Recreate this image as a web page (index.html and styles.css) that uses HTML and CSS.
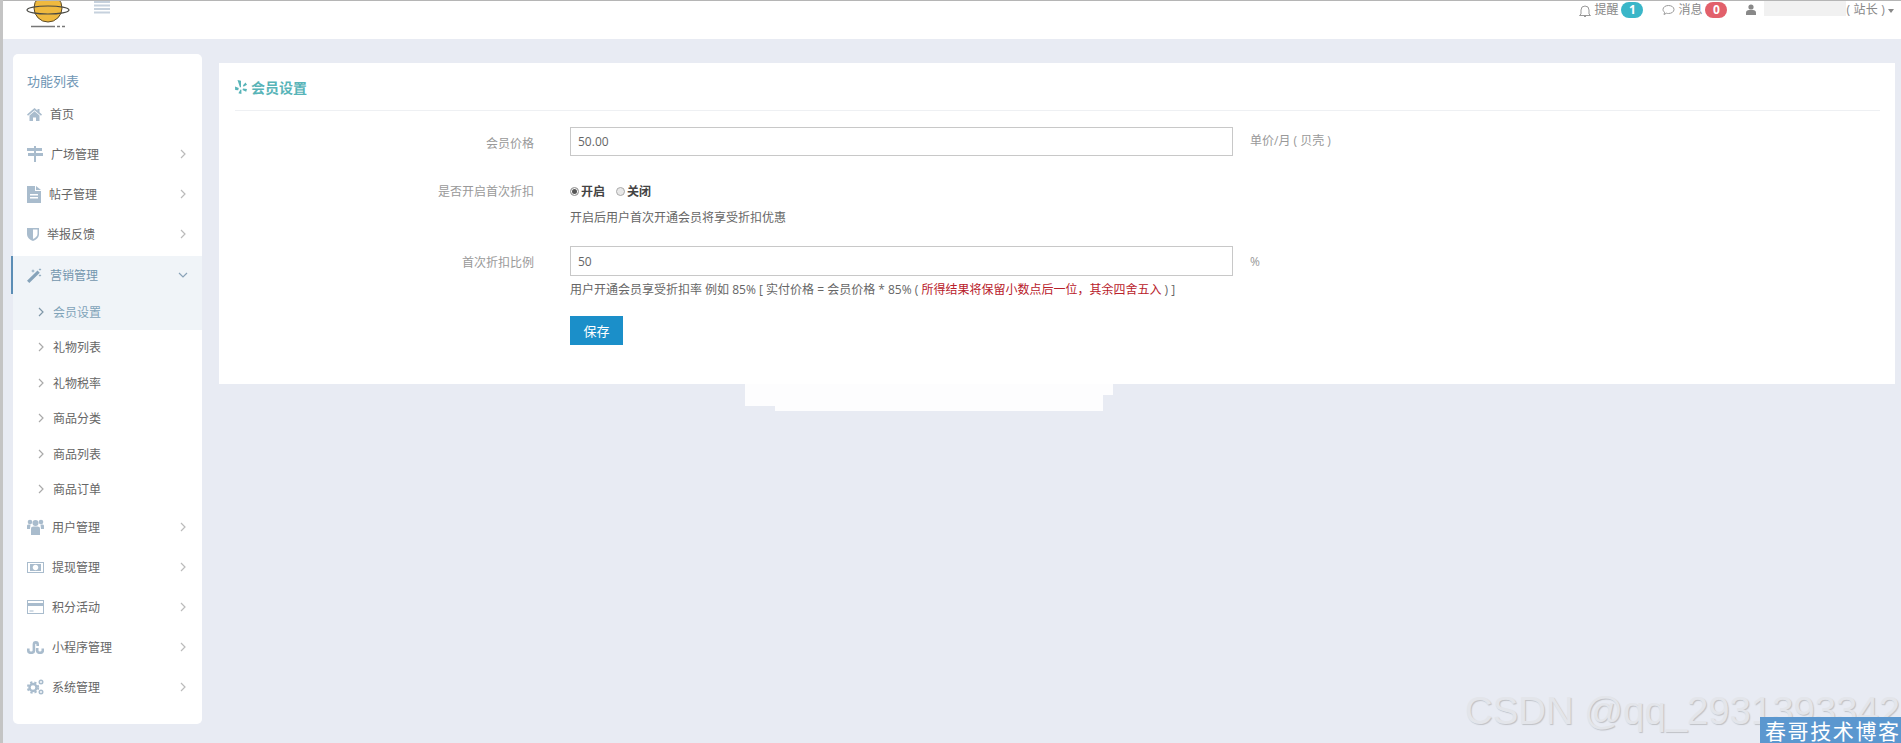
FILE: index.html
```html
<!DOCTYPE html>
<html lang="zh-CN">
<head>
  <meta charset="UTF-8">
  <title>会员设置</title>
  <link rel="stylesheet" href="styles.css">
</head>
<body>
<svg class="defs" width="0" height="0">
  <symbol id="chev-r" viewBox="0 0 6 10"><path d="M1 1l4 4-4 4" fill="none" stroke="currentColor" stroke-width="1.2"/></symbol>
  <symbol id="chev-d" viewBox="0 0 10 6"><path d="M1 1l4 4 4-4" fill="none" stroke="currentColor" stroke-width="1.2"/></symbol>
</svg>

<!-- header -->
<header class="topbar">
  <div class="brand">
    <svg class="logo" width="46" height="28" viewBox="0 0 46 28">
      <circle cx="22" cy="7" r="14" fill="#efb93f" stroke="#5a4a2a" stroke-width="1"/>
      <ellipse cx="22" cy="9" rx="21" ry="4" fill="none" stroke="#4a4a44" stroke-width="1.2"/>
      <path d="M5 25.500h34" stroke="#777" stroke-width="1.500" stroke-dasharray="24 2 3 2 3"/>
    </svg>
    <svg class="menu-icon" width="16" height="14" viewBox="0 0 16 14">
      <path d="M0 1h16M0 4.500h16M0 8h16M0 11.500h16" stroke="#c6d1dd" stroke-width="2"/>
    </svg>
  </div>
  <div class="top-right">
    <svg width="12" height="14" viewBox="0 0 12 14"><path d="M2 10V6a4 4 0 018 0v4l1.500 1.500h-11zM5 12.500h2" fill="none" stroke="#999"/></svg>
    <span class="top-text">提醒</span><span class="badge badge-teal">1</span>
    <svg class="msg-icon" width="13" height="12" viewBox="0 0 13 12"><path d="M6.500 1.500c3 0 5.500 1.600 5.500 4s-2.500 4-5.500 4c-.8 0-1.400 0-2-.3L2 10.500l.6-2.200C1.600 7.600 1 6.600 1 5.500c0-2.400 2.500-4 5.500-4z" fill="none" stroke="#999"/></svg>
    <span class="top-text">消息</span><span class="badge badge-red">0</span>
    <svg class="user-icon" width="10" height="11" viewBox="0 0 10 11"><circle cx="5" cy="3" r="2.600" fill="#888"/><path d="M0 11V8.500C0 7 1.500 6 3 6h4c1.500 0 3 1 3 2.500V11z" fill="#888"/></svg>
    <span class="name-blur"></span>
    <span class="top-text role">( 站长 )</span>
    <span class="caret"></span>
  </div>
</header>

<div class="page">
  <!-- sidebar -->
  <nav class="sidebar">
    <div class="side-title">功能列表</div>
    <a class="nav-item home">
      <svg class="nav-icon" width="15" height="13" viewBox="0 0 15 13"><path d="M7.500 0L0 6.500l1 1.200 6.500-5.500 6.500 5.500 1-1.200-2.500-2.200V1h-2v1.500zM2.500 7.500V13h3.500V9.500h3V13h3.500V7.500L7.500 3.200z"/></svg>
      <span>首页</span>
    </a>
    <a class="nav-item">
      <svg class="nav-icon" width="16" height="16" viewBox="0 0 16 16"><path d="M7 0h2v2h6v3H9v2h7v3H9v6H7v-6H1V7h6V5H0V2h7z"/></svg>
      <span>广场管理</span>
      <svg class="arrow"><use href="#chev-r"/></svg>
    </a>
    <a class="nav-item">
      <svg class="nav-icon" width="14" height="17" viewBox="0 0 14 17"><path d="M0 0h8v5h6v12H0zM9 0l5 4H9zM3 8v1.500h8V8zM3 11v1.500h8V11z" fill-rule="evenodd"/></svg>
      <span>帖子管理</span>
      <svg class="arrow"><use href="#chev-r"/></svg>
    </a>
    <a class="nav-item">
      <svg class="nav-icon" width="12" height="14" viewBox="0 0 12 14"><path d="M0 1h12v6c0 3.500-3 6-6 7-3-1-6-3.500-6-7zM6 2.500V12c2-.9 4.500-2.500 4.500-5V2.500z" fill-rule="evenodd"/></svg>
      <span>举报反馈</span>
      <svg class="arrow"><use href="#chev-r"/></svg>
    </a>
    <div class="nav-open">
      <a class="nav-item active">
        <svg class="nav-icon" width="15" height="15" viewBox="0 0 15 15"><path d="M10.500 2.500L0 12.700 2.300 15 12.800 4.800zM6 1l.5 1.500L8 3l-1.500.5L6 5l-.5-1.500L4 3l1.500-.5zM13 6l.4 1.100 1.100.4-1.100.4L13 9l-.4-1.100-1.100-.4 1.100-.4zM13 0l.4 1.100 1.100.4-1.100.4-.4 1.100-.4-1.100-1.100-.4 1.100-.4z"/></svg>
        <span>营销管理</span>
        <svg class="arrow arrow-down"><use href="#chev-d"/></svg>
      </a>
      <a class="sub-item current"><svg class="sub-arrow"><use href="#chev-r"/></svg><span>会员设置</span></a>
    </div>
    <a class="sub-item"><svg class="sub-arrow"><use href="#chev-r"/></svg><span>礼物列表</span></a>
    <a class="sub-item"><svg class="sub-arrow"><use href="#chev-r"/></svg><span>礼物税率</span></a>
    <a class="sub-item"><svg class="sub-arrow"><use href="#chev-r"/></svg><span>商品分类</span></a>
    <a class="sub-item"><svg class="sub-arrow"><use href="#chev-r"/></svg><span>商品列表</span></a>
    <a class="sub-item"><svg class="sub-arrow"><use href="#chev-r"/></svg><span>商品订单</span></a>
    <a class="nav-item">
      <svg class="nav-icon" width="17" height="16" viewBox="0 0 17 16"><circle cx="3" cy="3" r="2.300"/><circle cx="14" cy="3" r="2.300"/><circle cx="8.500" cy="4" r="3"/><path d="M0 10V7c0-1 .7-1.500 1.500-1.500h2L3 10zM17 10V7c0-1-.7-1.500-1.500-1.500h-2L14 10zM4 16V10c0-1.800 1-2.500 2.500-2.500h4C12 7.500 13 8.200 13 10v6z"/></svg>
      <span>用户管理</span>
      <svg class="arrow"><use href="#chev-r"/></svg>
    </a>
    <a class="nav-item">
      <svg class="nav-icon" width="17" height="11" viewBox="0 0 17 11"><path d="M0 0h17v11H0zM1 1v9h15V1zM3 2h11v7H3zM8.500 2.800c-1.500 0-2.800 1.200-2.800 2.700s1.300 2.700 2.800 2.700 2.800-1.200 2.800-2.700-1.300-2.700-2.800-2.700z" fill-rule="evenodd"/></svg>
      <span>提现管理</span>
      <svg class="arrow"><use href="#chev-r"/></svg>
    </a>
    <a class="nav-item">
      <svg class="nav-icon" width="17" height="14" viewBox="0 0 17 14"><path d="M0 0h17v14H0zM1 1v2h15V1zM1 6v7h15V6zM2.500 10.500h4v1h-4z" fill-rule="evenodd"/></svg>
      <span>积分活动</span>
      <svg class="arrow"><use href="#chev-r"/></svg>
    </a>
    <a class="nav-item">
      <svg class="stumble" width="17" height="13" viewBox="0 0 17 13"><path d="M1.300 7.500v2a2.800 2.300 0 005.600 0v-6a1.900 2.100 0 013.800 0v1.500M10.200 7v2.500a2.800 2.300 0 005.600 0v-2"/></svg>
      <span>小程序管理</span>
      <svg class="arrow"><use href="#chev-r"/></svg>
    </a>
    <a class="nav-item">
      <svg class="gears" width="17" height="16" viewBox="0 0 17 16"><circle class="gear-ring" cx="6" cy="8.500" r="3.500"/><circle class="gear-teeth" cx="6" cy="8.500" r="5.200"/><circle class="gear-small" cx="14" cy="3" r="1.700"/><circle class="gear-small" cx="14" cy="13" r="1.700"/></svg>
      <span>系统管理</span>
      <svg class="arrow"><use href="#chev-r"/></svg>
    </a>
  </nav>

  <!-- content -->
  <main class="content">
    <section class="card">
      <h2 class="card-title">
        <svg width="12" height="14" viewBox="0 0 12 14"><path d="M2.500 0l3.500.8V7L5 7.400zM0 6.500l3.800 1.500-.6 2.200L.2 10zM5.500 9.500l.9.2V14l-3-.7zM8 5.200L10.500 2.500l1.500 2.300-3.500 2zM8 8.500l4 .4-.8 2.800-3.700-1.700z"/></svg>
        <span>会员设置</span>
      </h2>
      <div class="form-row row-first">
        <label class="form-label">会员价格</label>
        <input class="form-input" type="text" value="50.00">
        <span class="unit">单价/月 ( 贝壳 )</span>
      </div>
      <div class="form-row row-radio">
        <label class="form-label">是否开启首次折扣</label>
        <div class="form-field">
          <div class="radios">
            <span class="radio checked"></span><b>开启</b>
            <span class="radio second"></span><b>关闭</b>
          </div>
          <p class="help help-first">开启后用户首次开通会员将享受折扣优惠</p>
        </div>
      </div>
      <div class="form-row row-rate">
        <label class="form-label">首次折扣比例</label>
        <input class="form-input" type="text" value="50">
        <span class="unit">%</span>
      </div>
      <p class="help help-rate">用户开通会员享受折扣率 例如 85% [ 实付价格 = 会员价格 * 85% ( <span class="red">所得结果将保留小数点后一位，其余四舍五入</span> ) ]</p>
      <button class="btn-save" type="button">保存</button>
    </section>
    <div class="smudge smudge-a"></div>
    <div class="smudge smudge-b"></div>
  </main>
</div>

<!-- image watermarks -->
<div class="wm-csdn">CSDN @qq_2931393342</div>
<div class="wm-blog">春哥技术博客</div>
</body>
</html>
```

FILE: styles.css
```css
* {
  box-sizing: border-box;
}
html, body {
  margin: 0;
  height: 743px;
  overflow: hidden;
}
body {
  position: relative;
  background: #e8ebf3;
  border-left: 3px solid #c4c4c4;
  font-family: "Open Sans", "Noto Sans CJK SC", sans-serif;
  font-size: 12px;
  color: #666;
}
.defs {
  position: absolute;
}

/* header */
.topbar {
  height: 39px;
  background: #fff;
  border-top: 1px solid #b5b5b5;
  display: flex;
  justify-content: space-between;
}
.brand {
  display: flex;
  align-items: flex-start;
  padding-left: 23px;
}
.menu-icon {
  margin-left: 22px;
}
.top-right {
  display: flex;
  align-items: flex-start;
  height: 18px;
  padding-right: 7px;
  padding-top: 1px;
}
.top-right svg {
  margin-top: 2px;
}
.top-text {
  margin-left: 3px;
  line-height: 16px;
  color: #888;
}
.badge {
  width: 22px;
  height: 16px;
  margin-left: 3px;
  border-radius: 8px;
  color: #fff;
  font-weight: 700;
  font-size: 12px;
  line-height: 16px;
  text-align: center;
}
.badge-teal {
  background: #39b6c8;
}
.badge-red {
  background: #e2606b;
}
.msg-icon {
  margin-left: 19px;
}
.user-icon {
  margin-left: 19px;
}
.name-blur {
  width: 82px;
  height: 15px;
  margin-left: 8px;
  margin-top: -1px;
  background: #f1f1f1;
}
.role {
  margin-left: 0;
  letter-spacing: .2px;
}
.caret {
  margin: 7px 0 0 3px;
  border: 3px solid transparent;
  border-top: 4px solid #888;
  border-bottom: 0;
}

.page {
  display: flex;
  align-items: flex-start;
  padding: 15px 6px 0 10px;
}

/* sidebar */
.sidebar {
  width: 189px;
  height: 670px;
  flex: none;
  padding-top: 16px;
  background: #fff;
  border-radius: 5px;
}
.side-title {
  height: 22px;
  padding-left: 14px;
  font-size: 13px;
  line-height: 22px;
  color: #6f96b5;
}
.nav-item {
  height: 40px;
  display: flex;
  align-items: center;
  padding-left: 14px;
  gap: 8px;
  position: relative;
}
.nav-item.home {
  height: 30px;
  margin-top: 7px;
  margin-bottom: 5px;
}
.nav-icon {
  flex: none;
  fill: #a9bccd;
}
.stumble {
  flex: none;
  fill: none;
  stroke: #a9bccd;
  stroke-width: 2.600;
}
.gears {
  flex: none;
  fill: none;
  stroke: #a9bccd;
}
.gear-ring {
  stroke-width: 2.400;
}
.gear-teeth {
  stroke-width: 2;
  stroke-dasharray: 2.200 2;
}
.gear-small {
  stroke-width: 1.600;
}
.arrow {
  position: absolute;
  right: 16px;
  top: 15px;
  width: 6px;
  height: 10px;
  color: #bbb;
}
.arrow-down {
  width: 10px;
  height: 6px;
  top: 16px;
  right: 14px;
  color: #8aa3b8;
}
.nav-open {
  margin-top: 2px;
  background: #f0f4f8;
  position: relative;
}
.nav-item.active {
  height: 38px;
  color: #7396ad;
  box-shadow: -2px 0 0 #5b8db5;
}
.active .nav-icon {
  fill: #86a3ba;
}
.sub-item {
  height: 35.500px;
  display: flex;
  align-items: center;
  padding-left: 25px;
  gap: 9px;
}
.sub-arrow {
  width: 6px;
  height: 10px;
  color: #aaa;
}
.sub-item.current {
  color: #7fa3b8;
}
.sub-item.current .sub-arrow {
  color: #7f97a8;
}

/* content */
.content {
  flex: 1;
  margin: 9px 0 0 17px;
  position: relative;
}
.card {
  height: 321px;
  padding: 0 15px 0 16px;
  background: #fff;
  position: relative;
  z-index: 1;
}
.card-title {
  height: 48px;
  margin: 0;
  display: flex;
  align-items: center;
  gap: 4px;
  padding-top: 1px;
  border-bottom: 1px solid #eef0f3;
  font-size: 14px;
  font-weight: 700;
  color: #58b4b8;
}
.card-title svg {
  fill: #58b4b8;
}
.form-row {
  display: flex;
  align-items: flex-start;
}
.form-label {
  width: 299px;
  flex: none;
  text-align: right;
  color: #999;
  line-height: 18px;
}
.form-input {
  width: 663px;
  height: 29px;
  margin-left: 36px;
  padding: 0 7px;
  flex: none;
  background: #fff;
  border: 1px solid #c8c8c8;
  font: inherit;
  color: #666;
}
.unit {
  margin-left: 17px;
  padding-top: 3px;
  color: #999;
  line-height: 22px;
}
.row-first {
  margin-top: 16px;
}
.row-first .form-label {
  padding-top: 8px;
}
.row-radio {
  margin-top: 26px;
}
.row-radio .form-label {
  padding-top: 1px;
}
.form-field {
  margin-left: 36px;
}
.radios {
  display: flex;
  align-items: center;
  height: 18px;
  color: #444;
}
.radio {
  width: 9px;
  height: 9px;
  margin-right: 2px;
  border-radius: 50%;
  border: 1px solid #aaa;
  background: #e8e8e8;
}
.radio.checked {
  background: #555;
  box-shadow: inset 0 0 0 1px #fff;
}
.radio.second {
  margin-left: 11px;
}
.help {
  margin: 0;
  line-height: 18px;
}
.help-first {
  margin-top: 9px;
}
.row-rate {
  margin-top: 19px;
}
.row-rate .form-label {
  padding-top: 8px;
}
.row-rate .form-input {
  height: 30px;
}
.row-rate .unit {
  padding-top: 5px;
}
.help-rate {
  margin: 5px 0 0 335px;
}
.red {
  color: #b8202a;
}
.btn-save {
  display: block;
  width: 53px;
  height: 29px;
  margin: 17px 0 0 335px;
  padding: 0;
  border: 0;
  background: #1b8fc9;
  color: #fff;
  font: inherit;
  font-size: 13px;
}

/* whited out patch under the card */
.smudge {
  position: absolute;
  background: #fdfdfe;
}
.smudge-a {
  left: 526px;
  top: 320px;
  width: 368px;
  height: 12px;
}
.smudge-b {
  left: 526px;
  top: 332px;
  width: 358px;
  height: 16px;
  clip-path: polygon(0 0, 100% 0, 100% 100%, 30px 100%, 30px 69%, 0 69%);
}

/* watermarks */
.wm-csdn {
  position: absolute;
  right: 1px;
  bottom: 12px;
  font-family: "Liberation Sans", sans-serif;
  font-size: 38.300px;
  line-height: 40px;
  color: #e3e5ea;
  text-shadow: 1px 1px 1px #bfc1c6;
  white-space: nowrap;
}
.wm-blog {
  position: absolute;
  right: 0;
  bottom: 0;
  width: 141px;
  height: 26px;
  padding-left: 5px;
  background: #5b97cf;
  color: #fff;
  font-family: "Noto Sans CJK SC", sans-serif;
  font-size: 21px;
  line-height: 26px;
  letter-spacing: 1.600px;
  white-space: nowrap;
}
```
